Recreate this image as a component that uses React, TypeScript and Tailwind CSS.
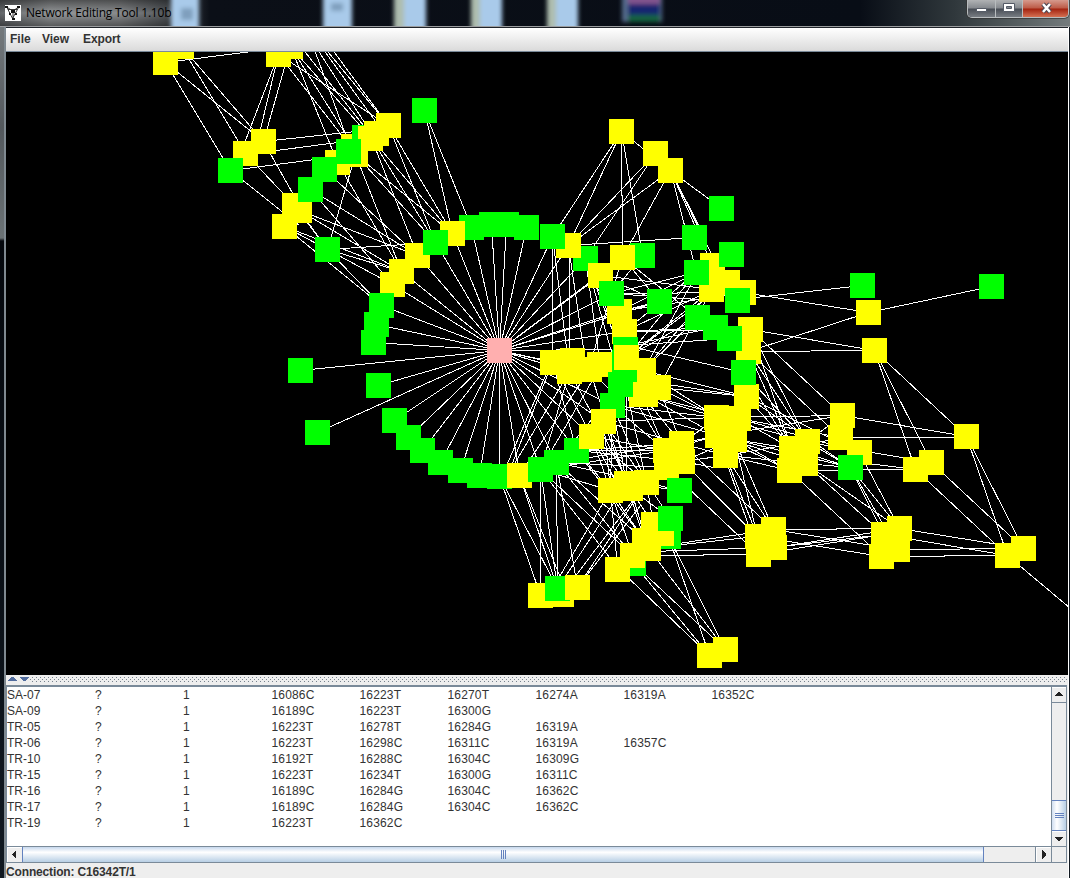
import React from "react";

type Point = [number, number];

// Top-left corners of the 25px node squares, in painting order.
const layers: { color: string; nodes: Point[] }[] = [
  { color: "#ffff00", nodes: [[169, 34], [153, 50], [278, 34], [266, 42], [233, 141], [251, 129], [325, 150], [341, 134], [343, 142]] },
  { color: "#00ff00", nodes: [[352, 125]] },
  { color: "#ffff00", nodes: [[376, 113], [364, 121], [358, 126], [287, 198], [282, 193], [272, 214]] },
  { color: "#00ff00", nodes: [[218, 158], [412, 98], [336, 139], [312, 157], [298, 177], [315, 237], [459, 215], [479, 212], [494, 212], [514, 215]] },
  { color: "#ffff00", nodes: [[440, 221], [405, 243], [389, 259], [380, 272], [556, 233]] },
  { color: "#00ff00", nodes: [[423, 230], [369, 293], [364, 312], [361, 330], [366, 373], [288, 358], [305, 420], [382, 408], [396, 425], [410, 438], [428, 450], [448, 458], [467, 463], [487, 464], [573, 246], [630, 243]] },
  { color: "#ffff00", nodes: [[556, 233], [507, 463], [610, 245], [588, 263], [607, 299], [612, 319]] },
  { color: "#00ff00", nodes: [[540, 224], [599, 281], [613, 337], [612, 350], [647, 289], [528, 457], [544, 450], [564, 438]] },
  { color: "#ffff00", nodes: [[540, 350], [560, 348], [557, 359], [577, 357], [587, 352], [614, 345], [631, 358], [646, 375], [629, 382]] },
  { color: "#00ff00", nodes: [[612, 370], [600, 393], [608, 372]] },
  { color: "#ffff00", nodes: [[633, 382], [591, 409], [579, 424], [609, 119], [643, 141], [658, 158], [700, 253], [715, 270], [731, 280], [699, 277], [738, 317], [736, 339], [734, 384]] },
  { color: "#00ff00", nodes: [[709, 196], [682, 225], [719, 242], [684, 260], [725, 288], [685, 305], [703, 315], [717, 326], [731, 360], [850, 273], [979, 274]] },
  { color: "#ffff00", nodes: [[856, 300], [862, 338], [704, 405], [726, 406], [714, 408], [705, 423], [722, 427], [713, 443], [669, 431], [653, 438], [670, 449], [654, 455], [598, 478], [614, 471], [634, 470], [618, 476]] },
  { color: "#ffff00", nodes: [[779, 436], [795, 429], [793, 451], [777, 458], [830, 403], [828, 425], [847, 440], [954, 424], [919, 450], [903, 457], [1011, 536], [995, 543], [887, 516], [871, 522], [885, 537], [869, 544], [761, 517], [745, 524], [762, 535], [746, 542]] },
  { color: "#00ff00", nodes: [[838, 455], [667, 478], [656, 524], [621, 551]] },
  { color: "#ffff00", nodes: [[641, 512], [649, 521], [632, 528], [636, 536], [620, 543], [605, 557], [528, 583], [549, 582], [697, 643], [713, 637]] },
  { color: "#00ff00", nodes: [[658, 506], [545, 576]] },
  { color: "#ffff00", nodes: [[565, 575]] },
  { color: "#ffafaf", nodes: [[487, 338]] },
];

const hub: Point = [499, 350];

const ring: Point[] = [
  [471, 227], [491, 224], [506, 224], [526, 227], [552, 236], [568, 245], [585, 258], [600, 275], [611, 293],
  [619, 311], [624, 331], [612, 349], [626, 377], [612, 405], [603, 421], [591, 436], [576, 450],
  [556, 462], [540, 469], [519, 475], [499, 476], [479, 475], [460, 470], [440, 462], [422, 450], [408, 437],
  [394, 420], [378, 385], [373, 342], [376, 324], [381, 305], [392, 284], [401, 271], [417, 255], [435, 242],
  [452, 233], [300, 370], [317, 432], [552, 362], [569, 371], [622, 257], [659, 301],
];

// Each row is a source point followed by every point it links to.
const fans: number[][] = [
  // upper left
  [165, 62, 230, 170, 263, 141, 290, 46],
  [181, 46, 245, 153, 263, 141],
  [278, 54, 240, 153, 257, 141, 350, 146, 388, 125],
  [290, 46, 263, 141, 337, 162, 353, 146, 371, 138],
  [305, 52, 363, 125], [315, 52, 345, 134], [319, 52, 371, 133],
  [325, 52, 378, 125], [328, 52, 388, 125], [334, 52, 388, 125],
  [263, 141, 364, 130, 299, 205], [276, 150, 337, 142], [230, 170, 353, 154, 299, 225],
  [245, 153, 294, 205],
  [388, 125, 452, 233, 435, 242], [371, 138, 452, 233, 435, 242, 417, 255],
  [355, 154, 452, 233, 435, 242, 401, 271, 327, 249], [337, 162, 401, 271],
  [324, 169, 417, 255], [310, 189, 417, 255, 392, 284],
  [299, 210, 417, 255, 401, 271, 327, 249], [294, 205, 327, 249],
  [284, 226, 401, 271, 381, 305, 327, 249],
  [327, 249, 435, 242, 401, 271, 381, 305, 392, 284],
  [424, 110, 452, 233, 471, 227],
  // upper right
  [621, 131, 552, 236, 568, 245, 622, 257, 642, 255, 670, 170],
  [655, 153, 568, 245, 585, 258], [670, 170, 568, 245, 622, 257, 721, 208, 696, 272, 712, 265, 706, 240, 720, 272],
  [568, 245, 694, 237, 585, 362], [552, 236, 552, 362, 569, 371], [569, 250, 569, 360],
  [585, 258, 626, 357, 620, 384, 600, 366, 612, 330], [600, 275, 659, 301, 712, 289],
  [622, 257, 611, 293, 659, 301, 697, 317], [642, 255, 611, 293],
  [611, 293, 696, 272, 743, 292, 712, 300, 590, 362],
  [619, 311, 659, 301, 696, 272, 743, 292],
  [624, 331, 696, 272, 712, 289, 697, 330, 715, 327, 727, 282],
  [626, 357, 696, 272, 712, 289, 727, 282, 697, 317],
  [626, 345, 743, 372, 729, 338, 715, 327], [643, 370, 697, 272, 712, 289, 697, 317],
  [658, 387, 715, 282],
  // far right
  [743, 292, 868, 312], [737, 299, 862, 285], [868, 312, 991, 286, 748, 351],
  [874, 350, 750, 329, 748, 351, 915, 469, 931, 462, 966, 436],
  [750, 329, 842, 415, 807, 441, 791, 448], [748, 351, 840, 437, 807, 441, 791, 448],
  [743, 372, 791, 448, 807, 441], [746, 396, 859, 452, 850, 467, 805, 463],
  [717, 417, 842, 415, 807, 441, 681, 443],
  [738, 418, 840, 437, 791, 448, 859, 452], [717, 435, 842, 415, 805, 463, 789, 470],
  [734, 439, 850, 467, 789, 470, 791, 448], [725, 455, 805, 463, 789, 470, 807, 441, 757, 536, 773, 529],
  [807, 441, 842, 415, 859, 452, 850, 467], [791, 448, 840, 437, 850, 467],
  [805, 463, 850, 467, 883, 534, 899, 528], [789, 470, 850, 470, 881, 556],
  [966, 436, 842, 415, 1007, 555, 1023, 548], [966, 437, 840, 437],
  [859, 450, 931, 462], [859, 462, 915, 469], [850, 469, 915, 469],
  [850, 467, 883, 534, 899, 528, 897, 549], [859, 452, 899, 528],
  [915, 469, 1007, 555], [931, 462, 1023, 548], [1007, 555, 1070, 608],
  [899, 528, 1023, 548], [883, 534, 1007, 555], [897, 549, 1023, 548], [881, 556, 1007, 555],
  [773, 529, 899, 528, 897, 549], [757, 536, 881, 556], [774, 547, 899, 528, 883, 534], [758, 554, 883, 534],
  [717, 435, 757, 536, 758, 554], [734, 439, 757, 536, 773, 529],
  [682, 461, 757, 536, 750, 530], [681, 443, 773, 529], [666, 467, 758, 554],
  [644, 548, 773, 529, 757, 536], [650, 551, 774, 547], [648, 555, 758, 554],
  // bottom right
  [617, 567, 709, 655], [633, 563, 709, 655, 725, 649], [648, 548, 725, 649], [668, 536, 709, 655, 725, 649],
  // bottom
  [499, 476, 540, 595, 557, 588], [519, 475, 557, 588, 565, 590],
  [540, 469, 540, 595, 557, 588], [556, 462, 557, 588, 577, 587],
  [610, 490, 552, 588], [626, 483, 557, 588], [646, 482, 577, 587, 561, 594], [640, 505, 577, 587],
  [552, 362, 507, 475, 620, 490, 576, 450], [545, 375, 507, 463], [569, 371, 507, 475, 540, 469, 632, 490],
  [589, 369, 519, 475, 620, 400, 626, 483], [600, 366, 540, 469],
  [620, 384, 556, 462],
  [540, 469, 617, 567, 632, 555, 610, 490, 665, 450], [556, 462, 632, 555, 644, 540, 646, 482, 666, 467, 681, 443],
  [576, 450, 610, 490, 665, 450, 681, 443, 682, 461, 644, 540],
  [591, 436, 610, 490, 626, 483, 646, 482, 665, 450],
  [603, 421, 610, 490, 626, 483, 646, 482, 681, 443, 717, 417],
  [612, 405, 610, 490, 626, 483, 646, 482, 665, 450, 717, 417, 717, 435],
  [625, 384, 646, 482, 665, 450, 717, 435], [626, 390, 626, 483],
  [641, 394, 665, 450, 681, 443, 717, 417, 738, 418],
  [643, 370, 746, 396, 717, 417], [658, 387, 717, 417, 746, 396, 681, 443], [641, 380, 746, 396],
  [681, 443, 717, 435, 725, 455, 717, 417], [682, 461, 725, 455, 734, 439, 713, 467], [665, 450, 717, 435],
  [610, 490, 617, 567, 632, 555, 644, 540], [626, 483, 644, 540, 653, 524, 679, 490],
  [646, 482, 653, 524, 670, 518, 679, 490], [630, 488, 648, 548, 670, 518],
];

const edges: number[][] = [
  ...ring.map(([x, y]) => [hub[0], hub[1], x, y]),
  ...fans.flatMap(([x, y, ...targets]) => {
    const out: number[][] = [];
    for (let i = 0; i < targets.length; i += 2) out.push([x, y, targets[i], targets[i + 1]]);
    return out;
  }),
];

const rows: string[][] = [
  ["SA-07", "?", "1", "16086C", "16223T", "16270T", "16274A", "16319A", "16352C"],
  ["SA-09", "?", "1", "16189C", "16223T", "16300G"],
  ["TR-05", "?", "1", "16223T", "16278T", "16284G", "16319A"],
  ["TR-06", "?", "1", "16223T", "16298C", "16311C", "16319A", "16357C"],
  ["TR-10", "?", "1", "16192T", "16288C", "16304C", "16309G"],
  ["TR-15", "?", "1", "16223T", "16234T", "16300G", "16311C"],
  ["TR-16", "?", "1", "16189C", "16284G", "16304C", "16362C"],
  ["TR-17", "?", "1", "16189C", "16284G", "16304C", "16362C"],
  ["TR-19", "?", "1", "16223T", "16362C"],
];

function TitleBar() {
  return (
    <header className="relative flex h-[27px] shrink-0 items-start overflow-hidden border-b border-[#9b9d9f] bg-[linear-gradient(90deg,#65686b_0px,#95989a_50px,#898b8d_120px,#55595d_165px,#0b0f17_210px,#080d16_860px,#30383c_955px,#626a6c_1040px,#747b7d_1070px)]">
      <svg className="absolute inset-0" width="1070" height="26" aria-hidden="true">
        <defs>
          <filter id="glass" x="-30%" y="-30%" width="160%" height="160%"><feGaussianBlur stdDeviation="2" /></filter>
          <linearGradient id="shade" x1="0" x2="0" y1="0" y2="1"><stop stopColor="#000" stopOpacity=".45" /><stop offset=".5" stopColor="#000" stopOpacity="0" /><stop offset="1" stopColor="#000" stopOpacity=".4" /></linearGradient>
        </defs>
        <rect width="175" height="26" fill="url(#shade)" />
        <g filter="url(#glass)">
          <path d="M171-20h28v66h-28zM323-20h29v66h-29zM400-20h26v66h-26zM477-20h25v66h-25zM554-20h24v66h-24z" fill="#a9caea" />
          <path d="M394-20h10v66h-10zM471-20h9v66h-9zM547-20h9v66h-9z" fill="#aebdaf" />
          <path d="M181 8h12v12h-12zM331 3h12v8h-12z" fill="#7f9fbd" />
          <path d="M622-5h40v27h-40z" fill="#546c8d" />
          <path d="M628-5h32v9h-32z" fill="#83558e" /><path d="M628 4h32v11h-32z" fill="#17266f" /><path d="M628 15h32v7h-32z" fill="#186440" />
        </g>
      </svg>
      <div className="relative flex items-center pl-[5px] pt-[5px]">
        <svg width="16" height="16" viewBox="0 0 16 16" className="bg-white" aria-hidden="true">
          <path d="M1.500 2L8 6l5.500-4M2 2.500l5.500 11 6-11M8 6v8M3 4.500h9" fill="none" stroke="#222" strokeWidth=".9" />
          <path d="M0 1h3v2H0zM12 1h3v2h-3zM6 5h4v3H6zM7 13h3v2H7zM4 8h2v2H4zM10 8h2v2h-2z" fill="#111" />
        </svg>
        <span className="ml-[5px] whitespace-nowrap font-['Open_Sans','Noto_Sans',sans-serif] text-[12px] leading-4 tracking-[-0.2px] text-black">Network Editing Tool 1.10b</span>
      </div>
      <div className="relative ml-auto mr-px flex h-[18px] w-[102px] overflow-hidden rounded-b-[5px] border border-t-0 border-[#b8bcbe] shadow-[0_0_0_1px_#333a]">
        <span className="h-full w-[28px] border-r border-[#b8bcbe] bg-[linear-gradient(#b0b2b4_0px,#85898e_8px,#484d55_9px,#777c82_17px)]" />
        <span className="h-full w-[27px] border-r border-[#b8bcbe] bg-[linear-gradient(#b0b2b4_0px,#85898e_8px,#484d55_9px,#777c82_17px)]" />
        <span className="h-full flex-1 bg-[linear-gradient(#d69a8d_0px,#bd5b47_8px,#a32310_9px,#d57052_17px)]" />
        <svg className="absolute inset-0" width="102" height="17" aria-hidden="true">
          <path d="M8.500 8.500h10v3h-10z" fill="#fff" stroke="#555b66" />
          <path d="M35.500 3.500h11v8h-11z" fill="#fff" stroke="#555b66" /><path d="M38.500 6.500h5v2h-5z" fill="#858a91" stroke="#555b66" />
          <path d="M75 4l7 8M82 4l-7 8" stroke="#4d4652" strokeWidth="4.500" /><path d="M75 4l7 8M82 4l-7 8" stroke="#fff" strokeWidth="2.500" />
        </svg>
      </div>
    </header>
  );
}

function NetworkCanvas() {
  return (
    <svg className="block h-[623px] w-[1062px] shrink-0 bg-black" viewBox="6 52 1062 623" shapeRendering="crispEdges" aria-label="Network">
      <g stroke="#ffffff" strokeWidth="1">
        {edges.map(([x1, y1, x2, y2], i) => <line key={i} x1={x1 + 0.5} y1={y1 + 0.5} x2={x2 + 0.5} y2={y2 + 0.5} />)}
      </g>
      {layers.map((layer, i) => (
        <g key={i} fill={layer.color}>
          {layer.nodes.map(([x, y], j) => <rect key={j} x={x} y={y} width="25" height="25" />)}
        </g>
      ))}
    </svg>
  );
}

function Divider() {
  return (
    <div className="flex h-[10px] shrink-0 items-center bg-[#eeeeee]">
      <svg width="1062" height="10" shapeRendering="crispEdges" aria-hidden="true">
        <defs><pattern id="grip" width="4" height="4" patternUnits="userSpaceOnUse"><path d="M0 0h1v1H0zM2 2h1v1H2z" fill="#77838e" /></pattern></defs>
        <rect x="1" y="2" width="1060" height="6" fill="url(#grip)" />
        <path d="M1 1h23v7H1z" fill="#eeeeee" />
        <path d="M2 6h9v-1h-1v-1h-1v-1h-1v-1h-3v1h-1v1h-1v1h-1zM14 2h9v1h-1v1h-1v1h-1v1h-3v-1h-1v-1h-1v-1h-1z" fill="#526d9f" />
      </svg>
    </div>
  );
}

function Arrow({ direction }: { direction: "up" | "down" | "left" | "right" }) {
  const paths = { up: "M3 9h9L8 5H7z", down: "M3 6h9L8 10H7z", left: "M9 3v9L5 8V7z", right: "M6 3v9l4-4V7z" };
  return (
    <svg width="15" height="15" viewBox="0 0 15 15" className="shrink-0 bg-[#eeeeee]" shapeRendering="crispEdges" aria-hidden="true">
      <path d="M0 15V0h15" fill="none" stroke="#fff" strokeWidth="2" />
      <path d={paths[direction]} fill="#222" />
    </svg>
  );
}

function DataTable() {
  return (
    <section className="flex h-[178px] w-[1061px] shrink-0 flex-col border border-t-2 border-[#7a8a99] bg-white">
      <div className="flex h-[160px] border-b border-[#7a8a99]">
        <div className="flex-1 overflow-hidden font-['Liberation_Sans',Arial,sans-serif] text-[12px] leading-4 tracking-[0.1px] text-[#333333]">
          {rows.map((row) => (
            <div key={row[0]} className="grid h-4 grid-cols-[repeat(9,88px)]">
              {row.map((cell, i) => <span key={i} className={i === 0 ? "tracking-normal" : i < 3 ? "" : "pl-[0.5px] tracking-[0.16px]"}>{cell}</span>)}
            </div>
          ))}
        </div>
        <div className="flex w-[15px] shrink-0 flex-col overflow-hidden border-l border-[#7a8a99] bg-[#eeeeee]">
          <div className="-ml-px flex"><Arrow direction="up" /></div>
          <div className="h-[99px] border-t border-[#7a8a99]" />
          <div className="flex h-[31px] flex-col items-center justify-center gap-px border-y border-[#6382bf] bg-[linear-gradient(90deg,#d0def0,#ffffff_35%,#b8cfe5)]">
            <i className="h-px w-[9px] bg-[#6382bf]" /><i className="h-px w-[9px] bg-[#6382bf]" /><i className="h-px w-[9px] bg-[#6382bf]" />
          </div>
          <div className="-ml-px flex"><Arrow direction="down" /></div>
        </div>
      </div>
      <div className="flex h-[15px] bg-[#eeeeee]">
        <Arrow direction="left" />
        <div className="flex w-[962px] items-center justify-center gap-px border-x border-[#6382bf] bg-[linear-gradient(#c7d8ed,#ffffff_35%,#b8cfe5)]">
          <i className="h-[9px] w-px bg-[#6382bf]" /><i className="h-[9px] w-px bg-[#6382bf]" /><i className="h-[9px] w-px bg-[#6382bf]" />
        </div>
        <div className="w-[52px] border-r border-[#7a8a99]" />
        <Arrow direction="right" />
        <div className="flex-1 border-l border-[#7a8a99]" />
      </div>
    </section>
  );
}

export default function App() {
  return (
    <main className="flex h-[878px] w-[1070px] flex-col overflow-hidden bg-[#eeeeee]">
      <TitleBar />
      <div className="flex min-h-0 flex-1">
        <div className="w-[6px] shrink-0 border-r-2 border-[#7f8990] bg-[linear-gradient(#74797c_0px,#53585c_100px,#6b7275_211px,#05080d_214px,#101820)]" />
        <div className="flex w-[1062px] shrink-0 flex-col border-t border-[#20242a] bg-[#eeeeee]">
          <nav className="flex h-6 shrink-0 items-center border-b border-[#7a8a99] bg-[linear-gradient(#ffffff,#dadada)] pb-px pl-1 font-['Liberation_Sans',Arial,sans-serif] text-[12px] font-bold text-[#333333]">
            <span className="w-[32px]">File</span><span className="w-[41px]">View</span><span className="tracking-[-0.1px]">Export</span>
          </nav>
          <NetworkCanvas />
          <Divider />
          <DataTable />
          <footer className="flex flex-1 items-center whitespace-nowrap pt-px font-['Liberation_Sans',Arial,sans-serif] text-[12px] font-bold leading-4 tracking-[-0.15px] text-[#333333]">Connection: C16342T/1</footer>
        </div>
        <div className="flex-1 border-l border-white bg-[#111820]" />
      </div>
    </main>
  );
}
